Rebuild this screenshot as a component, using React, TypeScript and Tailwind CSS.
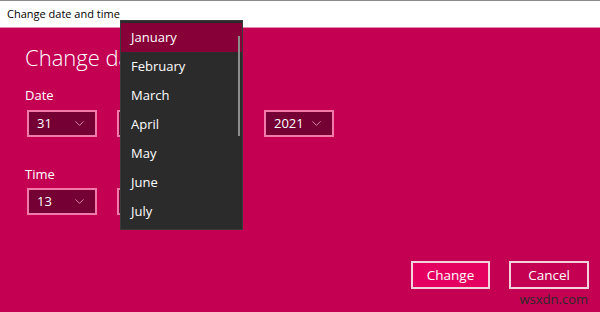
import { ChevronDown } from 'lucide-react'

const months = ['January', 'February', 'March', 'April', 'May', 'June', 'July']

function Picker({ value, className }: { value?: string; className: string }) {
  return (
    <div
      className={`h-[27px] border-2 border-[#f27aaa] bg-[#740034] flex items-center justify-between pl-[8px] pr-[8px] text-[13px] text-white ${className}`}
    >
      <span>{value}</span>
      <ChevronDown size={15} strokeWidth={1.2} className="text-[#f6b7cf]" />
    </div>
  )
}

export default function App() {
  return (
    <div className="relative w-[600px] h-[312px] flex flex-col border-t border-[#8a8a8a] font-['Open_Sans',sans-serif] overflow-hidden">
      {/* Title bar */}
      <div className="h-[26px] bg-white flex items-center pl-[7px] text-[11px] text-black shrink-0">
        Change date and time
      </div>

      {/* Body */}
      <div className="flex-1 flex flex-col bg-[#c30052] border-t border-[#e68ab0] px-[25px]">
        {/* heading runs under the open list, so only its start shows */}
        <h1 className="mt-[13px] w-[95px] overflow-hidden whitespace-nowrap text-[22px] leading-[32px] font-light text-white">
          Change date and time
        </h1>

        <div className="mt-[13px] text-[13px] leading-[18px] text-white">Date</div>
        <div className="mt-[6px] flex gap-[20px] pl-[2px]">
          <Picker value="31" className="w-[70px]" />
          <Picker className="w-[120px]" />
          <Picker value="2021" className="w-[70px] ml-[7px]" />
        </div>

        <div className="mt-[28px] text-[13px] leading-[18px] text-white">Time</div>
        <div className="mt-[5px] flex gap-[20px] pl-[2px]">
          <Picker value="13" className="w-[70px]" />
          <Picker className="w-[70px]" />
        </div>

        <div className="mt-auto mb-[23px] flex justify-end gap-[19px] mr-[-14px]">
          <button className="w-[79px] h-[28px] border-2 border-[#f3d2de] bg-[#e3005f] text-[13.5px] text-white">
            Change
          </button>
          <button className="w-[80px] h-[28px] border-2 border-[#f3d2de] bg-[#c30052] text-[13.5px] text-white">
            Cancel
          </button>
        </div>
      </div>

      {/* Month dropdown */}
      <div className="absolute left-[120px] top-[19px] w-[123px] h-[210px] bg-[#2b2b2b] border border-[#3a3a3a] pt-[2px]">
        {months.map((m, i) => (
          <div
            key={m}
            className={`h-[29px] flex items-center pl-[10px] text-[13px] text-white ${
              i === 0 ? 'bg-[#870038]' : ''
            }`}
          >
            {m}
          </div>
        ))}
        <div className="absolute right-[2px] top-[15px] w-[2px] h-[100px] bg-[#8c8c8c]" />
      </div>

      {/* Watermark */}
      <div className="absolute right-[12px] bottom-[3px] text-[13px] text-[#2a2a2a]">wsxdn.com</div>
    </div>
  )
}
